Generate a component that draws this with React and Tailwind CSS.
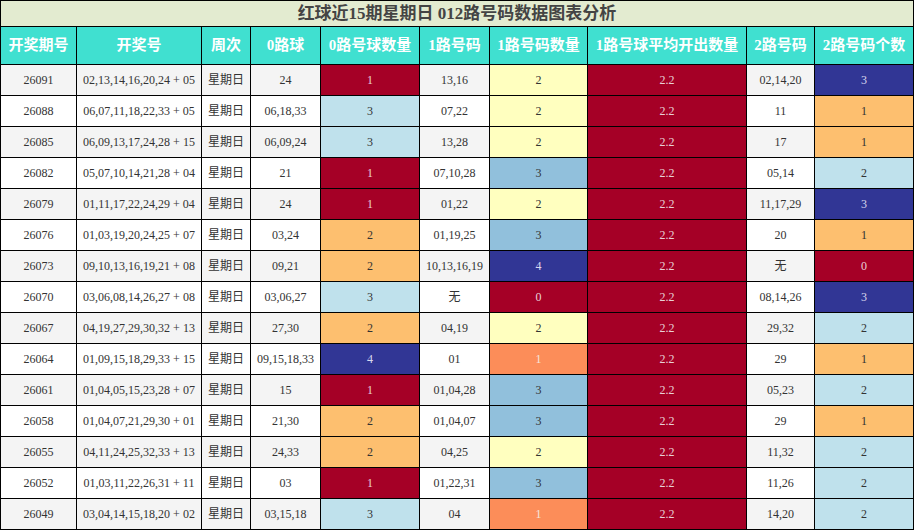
import React from "react";

const C = {
  red: "bg-[#a50026] text-[#e8d0d6]",
  lo: "bg-[#fdbf6f] text-[#333]",
  lb: "bg-[#bfe1ec] text-[#333]",
  db: "bg-[#313695] text-[#d8d8ee]",
  mb: "bg-[#91c0dc] text-[#333]",
  ye: "bg-[#ffffbf] text-[#333]",
  or: "bg-[#fc8d59] text-[#f4e4dc]",
};

const rows = [
  ["26091", "02,13,14,16,20,24 + 05", "24", "1", "red", "13,16", "2", "ye", "02,14,20", "3", "db"],
  ["26088", "06,07,11,18,22,33 + 05", "06,18,33", "3", "lb", "07,22", "2", "ye", "11", "1", "lo"],
  ["26085", "06,09,13,17,24,28 + 15", "06,09,24", "3", "lb", "13,28", "2", "ye", "17", "1", "lo"],
  ["26082", "05,07,10,14,21,28 + 04", "21", "1", "red", "07,10,28", "3", "mb", "05,14", "2", "lb"],
  ["26079", "01,11,17,22,24,29 + 04", "24", "1", "red", "01,22", "2", "ye", "11,17,29", "3", "db"],
  ["26076", "01,03,19,20,24,25 + 07", "03,24", "2", "lo", "01,19,25", "3", "mb", "20", "1", "lo"],
  ["26073", "09,10,13,16,19,21 + 08", "09,21", "2", "lo", "10,13,16,19", "4", "db", "无", "0", "red"],
  ["26070", "03,06,08,14,26,27 + 08", "03,06,27", "3", "lb", "无", "0", "red", "08,14,26", "3", "db"],
  ["26067", "04,19,27,29,30,32 + 13", "27,30", "2", "lo", "04,19", "2", "ye", "29,32", "2", "lb"],
  ["26064", "01,09,15,18,29,33 + 15", "09,15,18,33", "4", "db", "01", "1", "or", "29", "1", "lo"],
  ["26061", "01,04,05,15,23,28 + 07", "15", "1", "red", "01,04,28", "3", "mb", "05,23", "2", "lb"],
  ["26058", "01,04,07,21,29,30 + 01", "21,30", "2", "lo", "01,04,07", "3", "mb", "29", "1", "lo"],
  ["26055", "04,11,24,25,32,33 + 13", "24,33", "2", "lo", "04,25", "2", "ye", "11,32", "2", "lb"],
  ["26052", "01,03,11,22,26,31 + 11", "03", "1", "red", "01,22,31", "3", "mb", "11,26", "2", "lb"],
  ["26049", "03,04,14,15,18,20 + 02", "03,15,18", "3", "lb", "04", "1", "or", "14,20", "2", "lb"],
];

const headers = ["开奖期号", "开奖号", "周次", "0路球", "0路号球数量", "1路号码", "1路号码数量", "1路号球平均开出数量", "2路号码", "2路号码个数"];

const font = "font-['Liberation_Serif','Noto_Sans_CJK_SC',serif]";

export default function App() {
  return (
    <div className={`w-[914px] h-[530px] bg-black p-px ${font}`}>
      <div className="grid grid-cols-[75px_124px_48px_69px_98px_69px_97px_158px_67px_98px] grid-rows-[25px_37px_repeat(15,30px)] gap-px">
        <div className="col-span-10 bg-[#e3ebd0] flex items-center justify-center text-[17px] font-bold text-[#444] leading-none">
          红球近15期星期日 012路号码数据图表分析
        </div>
        {headers.map((h) => (
          <div key={h} className="bg-[#40e0d0] text-white font-bold text-[15px] flex items-center justify-center whitespace-nowrap leading-none">
            {h}
          </div>
        ))}
        {rows.map((r, i) => {
          const bg = i % 2 === 0 ? "bg-[#f4f4f4]" : "bg-white";
          const plain = `${bg} text-[#333] flex items-center justify-center text-[12px] whitespace-nowrap`;
          const col = (k) => `${C[k]} flex items-center justify-center text-[12px]`;
          return (
            <React.Fragment key={r[0]}>
              <div className={plain}>{r[0]}</div>
              <div className={plain}>{r[1]}</div>
              <div className={`${plain} text-[#222]`}>星期日</div>
              <div className={plain}>{r[2]}</div>
              <div className={col(r[4])}>{r[3]}</div>
              <div className={plain}>{r[5]}</div>
              <div className={col(r[7])}>{r[6]}</div>
              <div className={col("red")}>2.2</div>
              <div className={plain}>{r[8]}</div>
              <div className={col(r[10])}>{r[9]}</div>
            </React.Fragment>
          );
        })}
      </div>
    </div>
  );
}
